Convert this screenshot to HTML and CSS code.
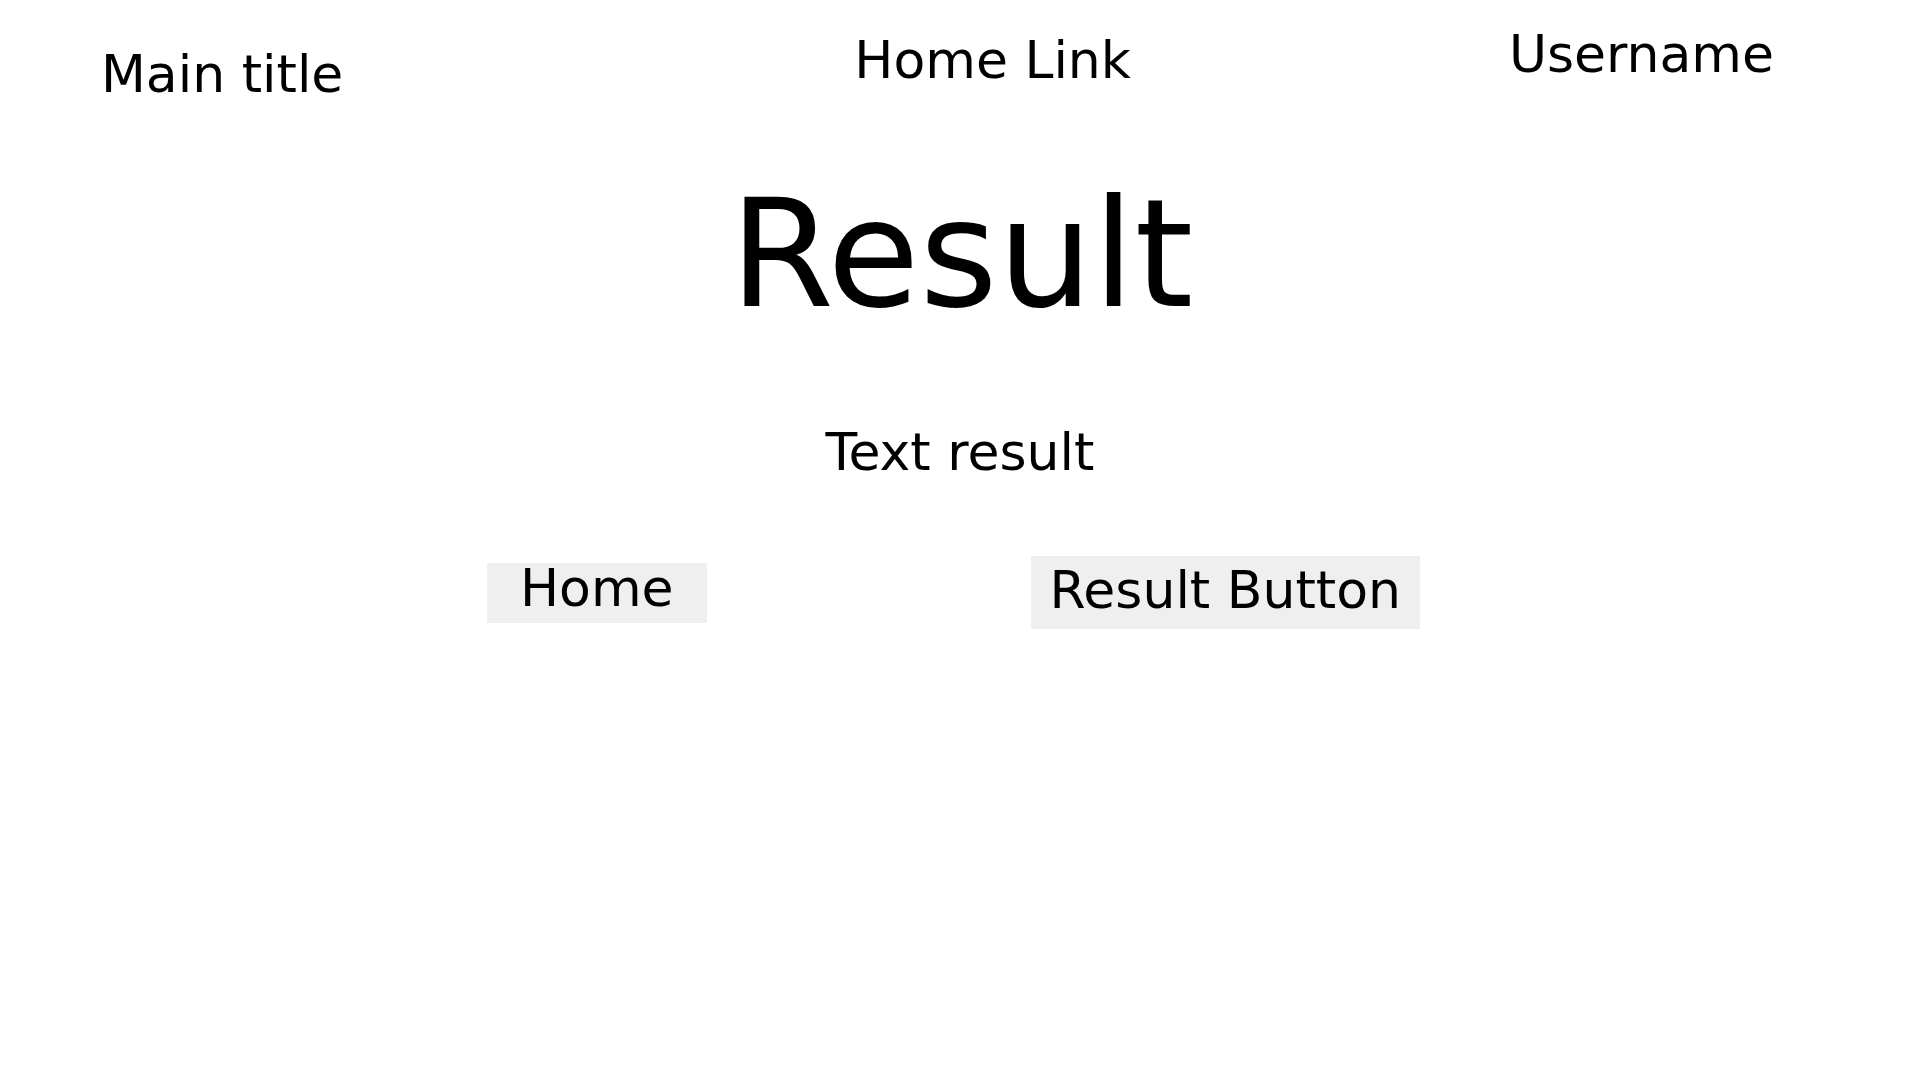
FILE: index.html
```html
<!DOCTYPE html>
<html lang="en">
<head>
<meta charset="utf-8">
<title>Result</title>
<link rel="stylesheet" href="styles.css">
</head>
<body>
<header class="topbar">
  <div class="main-title">Main title</div>
  <a class="home-link" href="#">Home Link</a>
  <div class="username">Username</div>
</header>
<main class="content">
  <h1 class="heading">Result</h1>
  <p class="text-result">Text result</p>
  <div class="actions">
    <button class="btn btn-home" type="button">Home</button>
    <button class="btn btn-result" type="button">Result Button</button>
  </div>
</main>
</body>
</html>
```
FILE: styles.css
```css
html, body {
  margin: 0;
  padding: 0;
  background: #ffffff;
}
body {
  font-family: "DejaVu Sans", sans-serif;
  color: #000000;
  width: 1920px;
  height: 1080px;
  overflow: hidden;
}
.topbar {
  display: flex;
  align-items: flex-start;
  padding-left: 101px;
  font-size: 52px;
  line-height: 60px;
}
.main-title {
  margin-top: 44px;
}
.home-link {
  margin-top: 30px;
  margin-left: 511px;
  color: #000000;
  text-decoration: none;
}
.username {
  margin-top: 24px;
  margin-left: 378px;
}
.content {
  display: flex;
  flex-direction: column;
  align-items: center;
}
.heading {
  margin: 0;
  margin-top: 60px;
  padding-left: 3px;
  font-size: 150px;
  line-height: 180px;
  font-weight: normal;
}
.text-result {
  margin: 0;
  margin-top: 78px;
  font-size: 52px;
  line-height: 60px;
}
.actions {
  display: flex;
  align-items: center;
  gap: 324px;
  margin-top: 74px;
  padding-right: 13px;
}
.btn {
  font-family: "DejaVu Sans", sans-serif;
  font-size: 52px;
  color: #000000;
  background: #efefef;
  border: none;
  margin: 0;
}
.btn-home {
  line-height: 50px;
  padding: 0 33px 10px;
}
.btn-result {
  line-height: 60px;
  padding: 4px 19px 9px;
}
```
